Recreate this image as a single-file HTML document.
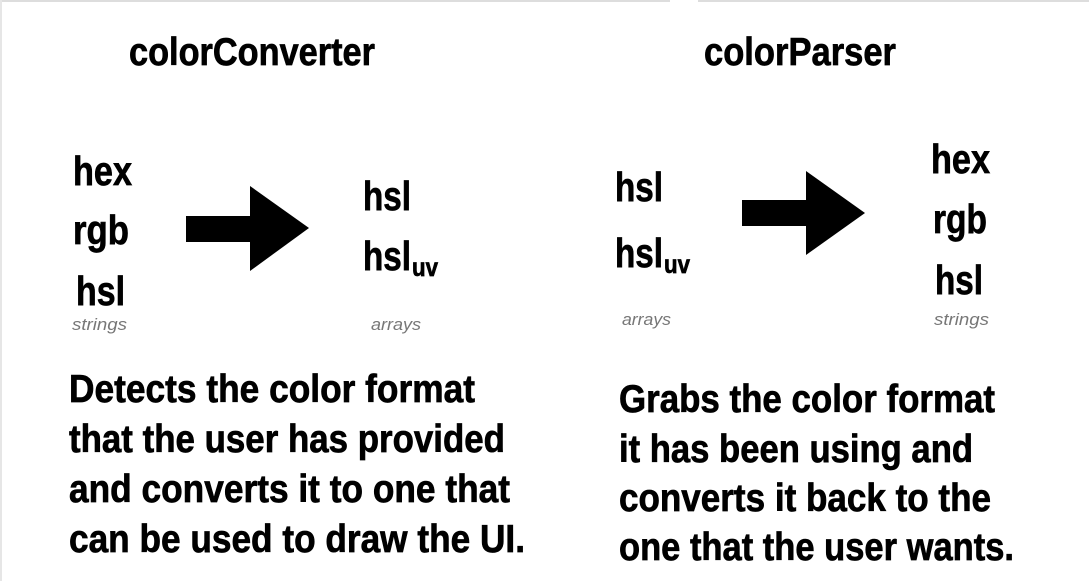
<!DOCTYPE html>
<html><head><meta charset="utf-8"><style>
html,body{margin:0;padding:0;background:#fff;}
svg{display:block;}
text{font-family:"Liberation Sans",Arial,sans-serif;font-weight:bold;fill:#000;stroke:#000;stroke-width:0.7px;}
.s{font-weight:normal;font-style:italic;fill:#777;stroke:none;font-size:17px;}
</style></head><body>
<svg width="1089" height="581" viewBox="0 0 1089 581" xmlns="http://www.w3.org/2000/svg">
<rect x="0" y="0" width="1089" height="581" fill="#fff"/>
<rect x="0" y="0" width="670" height="2" fill="#ddd"/>
<rect x="698" y="0" width="391" height="2" fill="#ddd"/>
<rect x="0" y="0" width="2" height="581" fill="#e6e6e6"/>

<text x="129" y="65" font-size="39" textLength="246" lengthAdjust="spacingAndGlyphs">colorConverter</text>
<text x="704" y="65" font-size="39" textLength="192" lengthAdjust="spacingAndGlyphs">colorParser</text>

<text x="73" y="185" font-size="41" textLength="59" lengthAdjust="spacingAndGlyphs">hex</text>
<text x="73" y="244" font-size="41" textLength="56" lengthAdjust="spacingAndGlyphs">rgb</text>
<text x="76" y="305" font-size="41" textLength="49" lengthAdjust="spacingAndGlyphs">hsl</text>
<text class="s" x="72" y="330" textLength="55" lengthAdjust="spacingAndGlyphs">strings</text>

<rect x="186" y="216" width="66" height="26" fill="#000"/>
<polygon points="250,186 309,228 250,271" fill="#000"/>

<text x="363" y="210" font-size="41" textLength="48" lengthAdjust="spacingAndGlyphs">hsl</text>
<text x="363" y="270" font-size="41" textLength="48" lengthAdjust="spacingAndGlyphs">hsl</text>
<text x="412" y="276" font-size="25" textLength="26" lengthAdjust="spacingAndGlyphs">uv</text>
<text class="s" x="371" y="330" textLength="50" lengthAdjust="spacingAndGlyphs">arrays</text>

<text x="615" y="201" font-size="41" textLength="48" lengthAdjust="spacingAndGlyphs">hsl</text>
<text x="615" y="267" font-size="41" textLength="48" lengthAdjust="spacingAndGlyphs">hsl</text>
<text x="664" y="273" font-size="25" textLength="26" lengthAdjust="spacingAndGlyphs">uv</text>
<text class="s" x="622" y="325" textLength="49" lengthAdjust="spacingAndGlyphs">arrays</text>

<rect x="742" y="200" width="66" height="26" fill="#000"/>
<polygon points="806,171 865,213 806,255" fill="#000"/>

<text x="931" y="173" font-size="41" textLength="59" lengthAdjust="spacingAndGlyphs">hex</text>
<text x="933" y="233" font-size="41" textLength="54" lengthAdjust="spacingAndGlyphs">rgb</text>
<text x="935" y="294" font-size="41" textLength="48" lengthAdjust="spacingAndGlyphs">hsl</text>
<text class="s" x="934" y="325" textLength="55" lengthAdjust="spacingAndGlyphs">strings</text>

<text x="69" y="402" font-size="39" textLength="406" lengthAdjust="spacingAndGlyphs">Detects the color format</text>
<text x="69" y="452" font-size="39" textLength="436" lengthAdjust="spacingAndGlyphs">that the user has provided</text>
<text x="69" y="502" font-size="39" textLength="441" lengthAdjust="spacingAndGlyphs">and converts it to one that</text>
<text x="69" y="552" font-size="39" textLength="456" lengthAdjust="spacingAndGlyphs">can be used to draw the UI.</text>

<text x="619" y="412" font-size="39" textLength="376" lengthAdjust="spacingAndGlyphs">Grabs the color format</text>
<text x="619" y="462" font-size="39" textLength="354" lengthAdjust="spacingAndGlyphs">it has been using and</text>
<text x="619" y="511" font-size="39" textLength="372" lengthAdjust="spacingAndGlyphs">converts it back to the</text>
<text x="619" y="560" font-size="39" textLength="395" lengthAdjust="spacingAndGlyphs">one that the user wants.</text>
</svg>
</body></html>
